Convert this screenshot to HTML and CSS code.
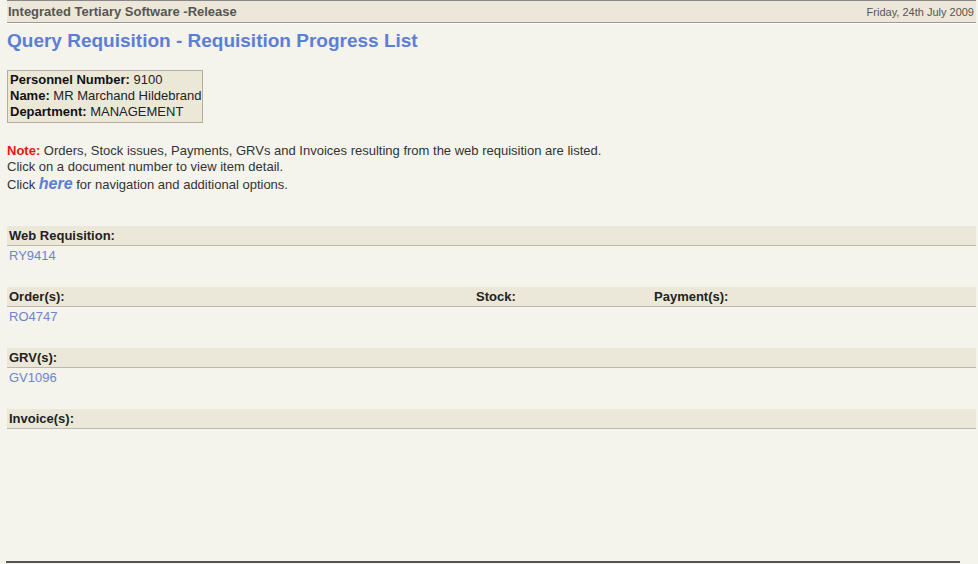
FILE: index.html
```html
<!DOCTYPE html>
<html>
<head>
<meta charset="utf-8">
<title>Query Requisition - Requisition Progress List</title>
<link rel="stylesheet" href="styles.css">
</head>
<body>
<div class="page">
  <div class="topbar">
    <span class="app">Integrated Tertiary Software -Release</span>
    <span class="date">Friday, 24th July 2009</span>
  </div>
  <h1 class="title">Query Requisition - Requisition Progress List</h1>
  <div class="infobox">
    <div><b>Personnel Number:</b> 9100</div>
    <div><b>Name:</b> MR Marchand Hildebrand</div>
    <div><b>Department:</b> MANAGEMENT</div>
  </div>
  <div class="notes">
    <div><span class="note">Note:</span> Orders, Stock issues, Payments, GRVs and Invoices resulting from the web requisition are listed.</div>
    <div>Click on a document number to view item detail.</div>
    <div class="nav">Click <a class="here" href="#">here</a> for navigation and additional options.</div>
  </div>

  <div class="section">
    <div class="band"><span>Web Requisition:</span></div>
    <div class="vals"><a href="#">RY9414</a></div>
  </div>
  <div class="section">
    <div class="band cols"><span>Order(s):</span><span>Stock:</span><span>Payment(s):</span></div>
    <div class="vals cols"><a href="#">RO4747</a><span></span><span></span></div>
  </div>
  <div class="section">
    <div class="band"><span>GRV(s):</span></div>
    <div class="vals"><a href="#">GV1096</a></div>
  </div>
  <div class="section">
    <div class="band"><span>Invoice(s):</span></div>
  </div>
  <div class="footer"></div>
</div>
</body>
</html>
```
FILE: styles.css
```css
html, body {
  margin: 0;
  padding: 0;
  background: #f4f3ec;
}
body {
  font-family: "Liberation Sans", Arial, sans-serif;
  font-size: 13px;
  color: #333;
}
.page {
  padding: 0 2px 0 7px;
}
.topbar {
  display: flex;
  justify-content: space-between;
  align-items: center;
  height: 21px;
  background: #ece7d8;
  border-top: 1px solid #888;
  border-bottom: 1px solid #999;
  box-shadow: 0 1px 0 #ffffff;
  padding: 0 2px 0 1px;
}
.app {
  font-weight: bold;
  font-size: 13px;
  color: #555;
}
.date {
  font-size: 11px;
  color: #555;
}
.title {
  margin: 7px 0 0 0;
  font-size: 19px;
  line-height: 22px;
  font-weight: bold;
  color: #5b7fd4;
}
.infobox {
  display: inline-block;
  margin-top: 18px;
  border: 1px solid #b3ae9f;
  background: #ece8d8;
  padding: 1px 1px 2px 2px;
  line-height: 16px;
  color: #222;
}
.infobox b {
  color: #111;
}
.notes {
  margin-top: 20px;
  line-height: 16px;
  color: #333;
}
.nav {
  padding-top: 1px;
}
.note {
  color: #e8141a;
  font-weight: bold;
}
.here {
  font-size: 16px;
  font-weight: bold;
  font-style: italic;
  color: #5b7fd4;
  text-decoration: none;
  line-height: 1;
}
.notes + .section {
  margin-top: 33px;
}
.section {
  margin-bottom: 21px;
}
.band {
  height: 19px;
  line-height: 20px;
  background: #ece8d9;
  border-bottom: 1px solid #bbb8ae;
  padding-left: 2px;
  font-weight: bold;
  color: #222;
}
.vals {
  height: 20px;
  line-height: 20px;
  padding-left: 2px;
}
.vals a {
  color: #6d86c9;
  text-decoration: none;
}
.cols {
  display: grid;
  grid-template-columns: 467px 178px 1fr;
}
.footer {
  width: 954px;
  margin-left: -1px;
  margin-top: 132px;
  border-top: 2px solid #555;
}
```
